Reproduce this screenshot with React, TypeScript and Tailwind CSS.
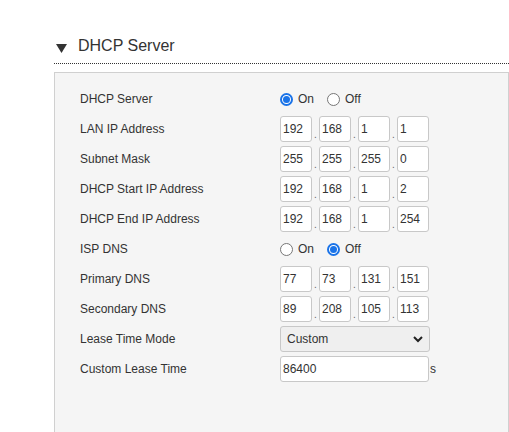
import React from "react";

const Label = ({ t }: { t: string }) => <div className="w-[200px] shrink-0">{t}</div>;

const Ip = ({ v }: { v: string[] }) => (
  <div className="flex items-end">
    {v.map((x, i) => (
      <React.Fragment key={i}>
        {i > 0 && <span className="w-[7px] text-center text-[10px] leading-[14px] text-[#666]">.</span>}
        <div className="w-[32px] h-[26px] border border-[#c8c8c8] rounded-[3px] bg-white pl-[2px] leading-[24px] text-[#333]">{x}</div>
      </React.Fragment>
    ))}
  </div>
);

const Radio = ({ on }: { on: boolean }) =>
  on ? (
    <span className="w-[13px] h-[13px] rounded-full border-2 border-[#1a73e8] flex items-center justify-center bg-white">
      <span className="w-[7px] h-[7px] rounded-full bg-[#1a73e8]" />
    </span>
  ) : (
    <span className="w-[13px] h-[13px] rounded-full border border-[#767676] bg-white" />
  );

const Radios = ({ on }: { on: boolean }) => (
  <div className="flex items-center gap-[5px]">
    <Radio on={on} />
    <span>On</span>
    <span className="w-[3px]" />
    <Radio on={!on} />
    <span>Off</span>
  </div>
);

export default function App() {
  const rows: [string, React.ReactNode][] = [
    ["DHCP Server", <Radios on />],
    ["LAN IP Address", <Ip v={["192", "168", "1", "1"]} />],
    ["Subnet Mask", <Ip v={["255", "255", "255", "0"]} />],
    ["DHCP Start IP Address", <Ip v={["192", "168", "1", "2"]} />],
    ["DHCP End IP Address", <Ip v={["192", "168", "1", "254"]} />],
    ["ISP DNS", <Radios on={false} />],
    ["Primary DNS", <Ip v={["77", "73", "131", "151"]} />],
    ["Secondary DNS", <Ip v={["89", "208", "105", "113"]} />],
    [
      "Lease Time Mode",
      <div className="w-[150px] h-[26px] border border-[#c8c8c8] rounded-[3px] bg-[#efefef] flex items-center justify-between px-[6px]">
        <span>Custom</span>
        <svg width="10" height="7" viewBox="0 0 10 7"><path d="M1 1l4 4 4-4" stroke="#222" strokeWidth="2" fill="none" /></svg>
      </div>,
    ],
    [
      "Custom Lease Time",
      <div className="flex items-center">
        <div className="w-[149px] h-[26px] border border-[#c8c8c8] rounded-[3px] bg-white pl-[2px] leading-[24px]">86400</div>
        <span className="ml-[1px]">s</span>
      </div>,
    ],
  ];
  return (
    <div className="w-[509px] h-[432px] bg-white overflow-hidden text-[12px] text-[#333]" style={{ fontFamily: '"Liberation Sans", Arial, sans-serif' }}>
      <div className="pl-[56px] pt-[35px] flex items-center h-[57px] box-border">
        <svg width="11" height="9" viewBox="0 0 11 9" className="mt-[4px]"><path d="M0 0h11L5.5 9z" fill="#333" /></svg>
        <span className="ml-[11px] text-[16px] text-[#333]">DHCP Server</span>
      </div>
      <div className="ml-[54px] mt-[6px] border-t border-dotted border-[#333]" />
      <div className="ml-[54px] mt-[8px] h-[400px] border border-[#d0d0d0] bg-[#f5f5f5] pl-[25px] pt-[11px]">
        {rows.map(([l, c], i) => (
          <div key={i} className="flex items-center h-[30px]">
            <Label t={l} />
            {c}
          </div>
        ))}
      </div>
    </div>
  );
}
